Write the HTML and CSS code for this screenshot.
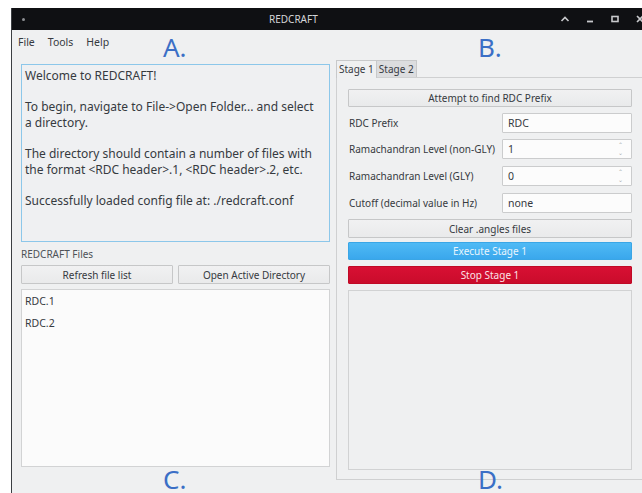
FILE: index.html
```html
<!DOCTYPE html>
<html lang="en">
<head>
<meta charset="utf-8">
<title>REDCRAFT</title>
<link rel="stylesheet" href="styles.css">
</head>
<body>
<div class="window">
  <div class="titlebar">
    <span class="tb-dot"></span>
    <span class="tb-title">REDCRAFT</span>
    <span class="tb-buttons">
      <svg class="tb-icon" width="10" height="8" viewBox="0 0 10 8"><path d="M1.5 6 L5 2.5 L8.5 6" fill="none" stroke="#c8c9cc" stroke-width="1.6"/></svg>
      <svg class="tb-icon" width="10" height="8" viewBox="0 0 10 8"><path d="M2 6.5 H8" fill="none" stroke="#c8c9cc" stroke-width="1.8"/></svg>
      <svg class="tb-icon" width="10" height="8" viewBox="0 0 10 8"><rect x="2" y="1.5" width="6" height="5" fill="none" stroke="#c8c9cc" stroke-width="1.6"/></svg>
      <svg class="tb-icon" width="10" height="8" viewBox="0 0 10 8"><path d="M2 1 L8 7 M8 1 L2 7" fill="none" stroke="#c8c9cc" stroke-width="1.6"/></svg>
    </span>
  </div>

  <div class="menubar">
    <span class="menu-item">File</span>
    <span class="menu-item">Tools</span>
    <span class="menu-item">Help</span>
  </div>

  <div class="main">
    <div class="col-left">
      <div class="log">
        <p>Welcome to REDCRAFT!</p>
        <p>To begin, navigate to File-&gt;Open Folder... and select<br>a directory.</p>
        <p>The directory should contain a number of files with<br>the format &lt;RDC header&gt;.1, &lt;RDC header&gt;.2, etc.</p>
        <p>Successfully loaded config file at: ./redcraft.conf</p>
      </div>
      <div class="group-label">REDCRAFT Files</div>
      <div class="btn-row">
        <button class="btn">Refresh file list</button>
        <button class="btn">Open Active Directory</button>
      </div>
      <ul class="file-list">
        <li>RDC.1</li>
        <li>RDC.2</li>
      </ul>
    </div>

    <div class="col-right">
      <div class="tabs">
        <span class="tab tab-active">Stage 1</span>
        <span class="tab">Stage 2</span>
      </div>
      <div class="pane">
        <button class="btn btn-wide btn-find">Attempt to find RDC Prefix</button>
        <div class="form-row">
          <span class="form-label">RDC Prefix</span>
          <span class="field">RDC</span>
        </div>
        <div class="form-row">
          <span class="form-label">Ramachandran Level (non-GLY)</span>
          <span class="field spin">1<span class="spin-arrows"><i>&#8963;</i><i>&#8964;</i></span></span>
        </div>
        <div class="form-row row-loose">
          <span class="form-label">Ramachandran Level (GLY)</span>
          <span class="field spin">0<span class="spin-arrows"><i>&#8963;</i><i>&#8964;</i></span></span>
        </div>
        <div class="form-row row-loose">
          <span class="form-label">Cutoff (decimal value in Hz)</span>
          <span class="field">none</span>
        </div>
        <button class="btn btn-wide">Clear .angles files</button>
        <button class="btn btn-wide btn-run">Execute Stage 1</button>
        <button class="btn btn-wide btn-stop">Stop Stage 1</button>
        <div class="output-box"></div>
      </div>
    </div>
  </div>

  <span class="marker marker-a">A.</span>
  <span class="marker marker-b">B.</span>
  <span class="marker marker-c">C.</span>
  <span class="marker marker-d">D.</span>
</div>
</body>
</html>
```

FILE: styles.css
```css
html, body {
  margin: 0;
  padding: 0;
  background: #ffffff;
  overflow: hidden;
  height: 493px;
}

body {
  padding: 8px 0 0 11px;
  box-sizing: border-box;
  font-family: "Noto Sans", "DejaVu Sans", sans-serif;
  color: #363a3f;
}

.window {
  position: relative;
  width: 645px;
  height: 485px;
  background: #eff0f1;
  border-left: 1px solid #3c3f43;
  box-sizing: border-box;
}

/* title bar */
.titlebar {
  height: 22px;
  background: #0f1013;
  display: flex;
  align-items: center;
  color: #d4d5d8;
  font-size: 10px;
}

.tb-dot {
  width: 3px;
  height: 3px;
  border-radius: 50%;
  background: #8d8f93;
  margin-left: 10px;
}

.tb-title {
  margin-left: 244px;
}

.tb-buttons {
  display: flex;
  align-items: center;
  gap: 15px;
  margin-left: 242px;
}

.tb-icon { display: block; }

/* menu bar */
.menubar {
  height: 30px;
  display: flex;
  gap: 13px;
  padding: 5px 0 0 6px;
  box-sizing: border-box;
  font-size: 10.5px;
  line-height: 14px;
}

/* two columns */
.main {
  display: flex;
  gap: 6px;
  padding-left: 9px;
}

.col-left {
  width: 309px;
  display: flex;
  flex-direction: column;
  padding-top: 4px;
}

.log {
  height: 178px;
  box-sizing: border-box;
  border: 1px solid #8cc7ea;
  background: #eff0f2;
  padding: 3px 3px;
  font-size: 12px;
  line-height: 15.6px;
  white-space: nowrap;
}

.log p {
  margin: 0 0 15.6px;
}

.group-label {
  margin-top: 5px;
  font-size: 10px;
  line-height: 14px;
  color: #4d5257;
}

.btn-row {
  display: flex;
  gap: 5px;
  margin-top: 4px;
}

.btn {
  flex: 1;
  height: 19px;
  padding: 0;
  box-sizing: border-box;
  border: 1px solid #c6c7c8;
  border-radius: 1px;
  background: linear-gradient(#f1f1f2, #e9eaeb);
  font-family: inherit;
  font-size: 10px;
  color: #363a3f;
}

.file-list {
  list-style: none;
  margin: 5px 0 0;
  padding: 0 0 0 3px;
  height: 178px;
  box-sizing: border-box;
  border: 1px solid #d2d3d4;
  background: #fbfbfb;
  font-size: 10.5px;
}

.file-list li {
  height: 22px;
  line-height: 22px;
}

/* right column: tab widget */
.col-right {
  width: 309px;
  display: flex;
  flex-direction: column;
}

.tabs {
  display: flex;
  height: 17px;
}

.tab {
  box-sizing: border-box;
  height: 17px;
  padding: 0 2px;
  font-size: 10px;
  line-height: 16px;
  background: #dcdddf;
  border: 1px solid #c8c9ca;
  border-bottom: none;
}

.tab-active {
  background: #eff0f1;
  position: relative;
  z-index: 1;
  height: 18px;
}

.tab + .tab { border-left: none; }

.pane {
  height: 403px;
  box-sizing: border-box;
  border: 1px solid #cfd0d1;
  padding: 11px 12px 0 11px;
  display: flex;
  flex-direction: column;
  gap: 6px;
}

.btn-wide {
  flex: none;
  width: 100%;
}

.btn-find { height: 18px; }

.form-row {
  display: flex;
  align-items: center;
  height: 20px;
}

.row-loose { margin-top: 1px; }

.form-label {
  width: 153px;
  padding-left: 1px;
  font-size: 10px;
  white-space: nowrap;
}

.field {
  flex: 1;
  height: 20px;
  box-sizing: border-box;
  border: 1px solid #cbcccd;
  border-radius: 1px;
  background: #fcfcfc;
  font-size: 10.5px;
  line-height: 18px;
  padding-left: 5px;
  position: relative;
}

.spin-arrows {
  position: absolute;
  right: 8px;
  top: 1px;
  display: flex;
  flex-direction: column;
  font-size: 6px;
  line-height: 8px;
  color: #a8aaad;
}

.spin-arrows i { font-style: normal; }

.btn-run {
  margin-top: -2px;
  height: 18px;
  border-color: #3aa6e6;
  background: linear-gradient(#4fbaf5, #3aa7ec);
  color: #e9f5fd;
}

.btn-stop {
  height: 18px;
  border-color: #c00a26;
  background: linear-gradient(#d81033, #ca0c2b);
  color: #fbe3e7;
}

.output-box {
  height: 180px;
  box-sizing: border-box;
  border: 1px solid #d1d2d3;
  background: #eff0f1;
}

/* blue annotation letters laid over the window */
.marker {
  position: absolute;
  font-family: "Noto Sans", "DejaVu Sans", sans-serif;
  font-size: 26px;
  line-height: 24px;
  color: #3b6fc6;
}

.marker-a { left: 151px; top: 27px; }
.marker-b { left: 466px; top: 27px; }
.marker-c { left: 151px; top: 459px; }
.marker-d { left: 466px; top: 459px; }
```
